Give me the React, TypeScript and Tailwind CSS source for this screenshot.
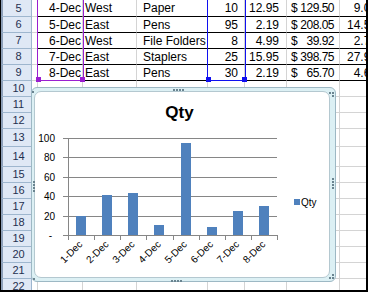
import React from 'react';

const TABLE = [
  ['4-Dec', 'West', 'Paper', '10', '12.95', '129.50', '9.07'],
  ['5-Dec', 'East', 'Pens', '95', '2.19', '208.05', '14.56'],
  ['6-Dec', 'West', 'File Folders', '8', '4.99', '39.92', '2.79'],
  ['7-Dec', 'East', 'Staplers', '25', '15.95', '398.75', '27.91'],
  ['8-Dec', 'East', 'Pens', '30', '2.19', '65.70', '4.60'],
];

const EMPTY_ROWS = [10, 11, 12, 13, 14, 15, 16, 17, 18, 19, 20, 21, 22];

// odd row heights in the sheet
const ROW_H: Record<number, string> = {
  5: 'h-[17px]',
  13: 'h-[18px]',
  14: 'h-[20px]',
};

const DAYS = ['1-Dec', '2-Dec', '3-Dec', '4-Dec', '5-Dec', '6-Dec', '7-Dec', '8-Dec'];
const QTY = [20, 41, 43, 10, 95, 8, 25, 30];

const RowHeader: React.FC<{ n: number }> = ({ n }) => (
  <div className="w-[31px] shrink-0 flex items-center justify-center pl-[3px] bg-[#dfe8f5] border-l-2 border-l-[#8d9fb8] border-r border-r-[#9eb6ce] border-b border-b-[#9eb6ce] text-[11px] text-[#1f3050]">
    {n}
  </div>
);

const SheetRow: React.FC<{ n: number; data?: string[] }> = ({ n, data }) => {
  const h = ROW_H[n] ?? 'h-[16px]';
  const line = data ? 'border-b-black' : 'border-b-[#d4d4d4]';
  const cell = `shrink-0 flex items-center border-b border-r border-r-[#d4d4d4] ${line}`;
  return (
    <div className={`flex ${h}`}>
      <RowHeader n={n} />
      <div className="w-[6px] shrink-0 border-b border-r border-[#d4d4d4]" />
      <div className={`${cell} w-[45px] justify-end pr-[1px]`}>{data?.[0]}</div>
      <div className={`${cell} w-[54px] pl-[2px]`}>{data?.[1]}</div>
      <div className={`${cell} w-[71px] pl-[6px] whitespace-nowrap`}>{data?.[2]}</div>
      <div className={`${cell} w-[37px] justify-end pr-[6px]`}>{data?.[3]}</div>
      <div className={`${cell} w-[42px] justify-end pr-[7px]`}>{data?.[4]}</div>
      <div className={`${cell} w-[53px] justify-between pl-[4px] pr-[5px] tracking-[-0.5px]`}>
        {data && (
          <>
            <span>$</span>
            <span>{data[5]}</span>
          </>
        )}
      </div>
      <div className={`${cell} w-[46px] justify-end pr-[8px]`}>{data?.[6]}</div>
      <div className={`${cell} w-[40px]`} />
    </div>
  );
};

const QtyChart: React.FC = () => {
  const x0 = 33;
  const x1 = 242;
  const y0 = 143;
  const k = 0.973;
  const catW = (x1 - x0) / 8;
  const yOf = (v: number) => Math.round(y0 - v * k) + 0.5;

  return (
    <svg width={294} height={185} className="block">
      <text x={144.5} y={26} textAnchor="middle" fontSize={17} fontWeight="bold" fill="#000">
        Qty
      </text>

      {[20, 40, 60, 80, 100].map((v) => (
        <line key={v} x1={28} x2={x1} y1={yOf(v)} y2={yOf(v)} stroke="#868686" />
      ))}
      {[0, 20, 40, 60, 80, 100].map((v) => (
        <text key={v} x={v === 0 ? 17 : 20} y={yOf(v) + 3} textAnchor="end" fontSize={10} fill="#000">
          {v === 0 ? '-' : v}
        </text>
      ))}

      {QTY.map((v, i) => (
        <rect
          key={i}
          x={Math.round(x0 + catW * (i + 0.5) - 5)}
          y={Math.round(y0 - v * k)}
          width={10}
          height={Math.round(v * k)}
          fill="#4f81bd"
        />
      ))}

      <line x1={x0 + 0.5} x2={x0 + 0.5} y1={yOf(100)} y2={y0 + 1} stroke="#868686" />
      <line x1={28} x2={x1} y1={y0 + 0.5} y2={y0 + 0.5} stroke="#868686" />
      {Array.from({ length: 9 }).map((_, i) => {
        const x = Math.round(x0 + catW * i) + 0.5;
        return <line key={i} x1={x} x2={x} y1={y0} y2={y0 + 5} stroke="#868686" />;
      })}

      {DAYS.map((d, i) => {
        const x = x0 + catW * (i + 0.5) + 2;
        const y = 153;
        return (
          <text
            key={d}
            x={x}
            y={y}
            textAnchor="end"
            fontSize={10}
            fill="#000"
            transform={`rotate(-45 ${x} ${y})`}
          >
            {d}
          </text>
        );
      })}

      {/* legend */}
      <rect x={259} y={107} width={6} height={6} fill="#4f81bd" />
      <text x={266} y={113.5} fontSize={10} fill="#000">
        Qty
      </text>
    </svg>
  );
};

// little grab-handle dots on the selected chart frame
const FrameHandles: React.FC = () => {
  const dots: [number, number][] = [
    [141, 1], [144, 1], [147, 1], [150, 1],
    [139, 192], [142, 192], [145, 192], [148, 192],
    [300, 90], [300, 93], [300, 96], [300, 99],
    [1, 93], [1, 96], [1, 99], [1, 102],
    [297, 4], [300, 4], [300, 7],
    [297, 189], [300, 189], [300, 186],
    [0, 3], [1, 190],
  ];
  return (
    <svg width={305} height={195} className="absolute left-0 top-0 pointer-events-none">
      {dots.map(([x, y], i) => (
        <rect key={i} x={x} y={y} width={2} height={2} fill="#6a8490" />
      ))}
    </svg>
  );
};

export default function App() {
  return (
    <div className="relative w-[368px] h-[292px] overflow-hidden bg-white border-l border-r-2 border-b-2 border-black font-['Liberation_Sans',Arial,sans-serif] text-[12px] text-black leading-none">
      <div className="flex flex-col">
        {TABLE.map((r, i) => (
          <SheetRow key={i} n={i + 5} data={r} />
        ))}
        {EMPTY_ROWS.map((n) => (
          <SheetRow key={n} n={n} />
        ))}
      </div>

      {/* range highlights: categories (purple) and values (blue) */}
      <div className="absolute left-[36px] top-[-10px] w-[47px] h-[91px] border border-[#9a1fd0]" />
      <div className="absolute left-[35px] top-[77px] w-[5px] h-[5px] bg-[#9a1fd0]" />
      <div className="absolute left-[79px] top-[77px] w-[5px] h-[5px] bg-[#9a1fd0]" />
      <div className="absolute left-[206px] top-[-10px] w-[39px] h-[91px] border border-[#1010f0]" />
      <div className="absolute left-[205px] top-[77px] w-[5px] h-[5px] bg-[#1010f0]" />
      <div className="absolute left-[241px] top-[77px] w-[5px] h-[5px] bg-[#1010f0]" />

      {/* chart object */}
      <div className="absolute left-[30px] top-[87px] w-[305px] h-[195px] rounded-[6px] border border-[#9db8c4] bg-[#dcf0f4] pt-[3px] pl-[2px] pr-[5px] pb-[3px]">
        <div className="w-full h-full bg-white border border-[#b4c8d0] rounded-[7px] overflow-hidden">
          <QtyChart />
        </div>
        <FrameHandles />
      </div>
    </div>
  );
}
